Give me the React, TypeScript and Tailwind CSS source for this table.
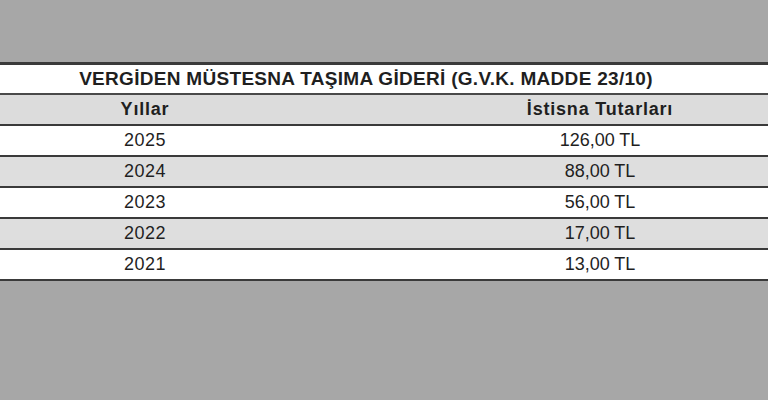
import React from 'react';

interface Row {
  year: string;
  amount: string;
}

const rows: Row[] = [
  { year: '2025', amount: '126,00 TL' },
  { year: '2024', amount: '88,00 TL' },
  { year: '2023', amount: '56,00 TL' },
  { year: '2022', amount: '17,00 TL' },
  { year: '2021', amount: '13,00 TL' },
];

const App: React.FC = () => {
  return (
    <div
      className="w-[768px] h-[400px] bg-[#a7a7a7] pt-[62px] text-[#1f1f1f]"
      style={{ fontFamily: '"Liberation Sans", Arial, sans-serif' }}
    >
      <div className="bg-white border-t-[3px] border-[#3a3a3a]">
        <div className="h-[30px] flex items-center justify-center pr-[36px] text-[19px] font-bold tracking-[0.3px] border-b-2 border-[#4a4a4a]">
          VERGİDEN MÜSTESNA TAŞIMA GİDERİ (G.V.K. MADDE 23/10)
        </div>
        <div className="grid grid-cols-[290px_1fr] h-[31px] items-center bg-[#dcdcdc] text-[18px] font-bold tracking-[0.8px] border-b-2 border-[#3a3a3a]">
          <div className="text-center">Yıllar</div>
          <div className="text-center pl-[142px]">İstisna Tutarları</div>
        </div>
        {rows.map((row, i) => (
          <div
            key={row.year}
            className={`grid grid-cols-[290px_1fr] h-[31px] items-center text-[18px] border-b-2 border-[#3a3a3a] ${
              i % 2 === 1 ? 'bg-[#dedede]' : 'bg-white'
            }`}
          >
            <div className="text-center tracking-[0.5px]">{row.year}</div>
            <div className="text-center pl-[142px]">{row.amount}</div>
          </div>
        ))}
      </div>
    </div>
  );
};

export default App;
